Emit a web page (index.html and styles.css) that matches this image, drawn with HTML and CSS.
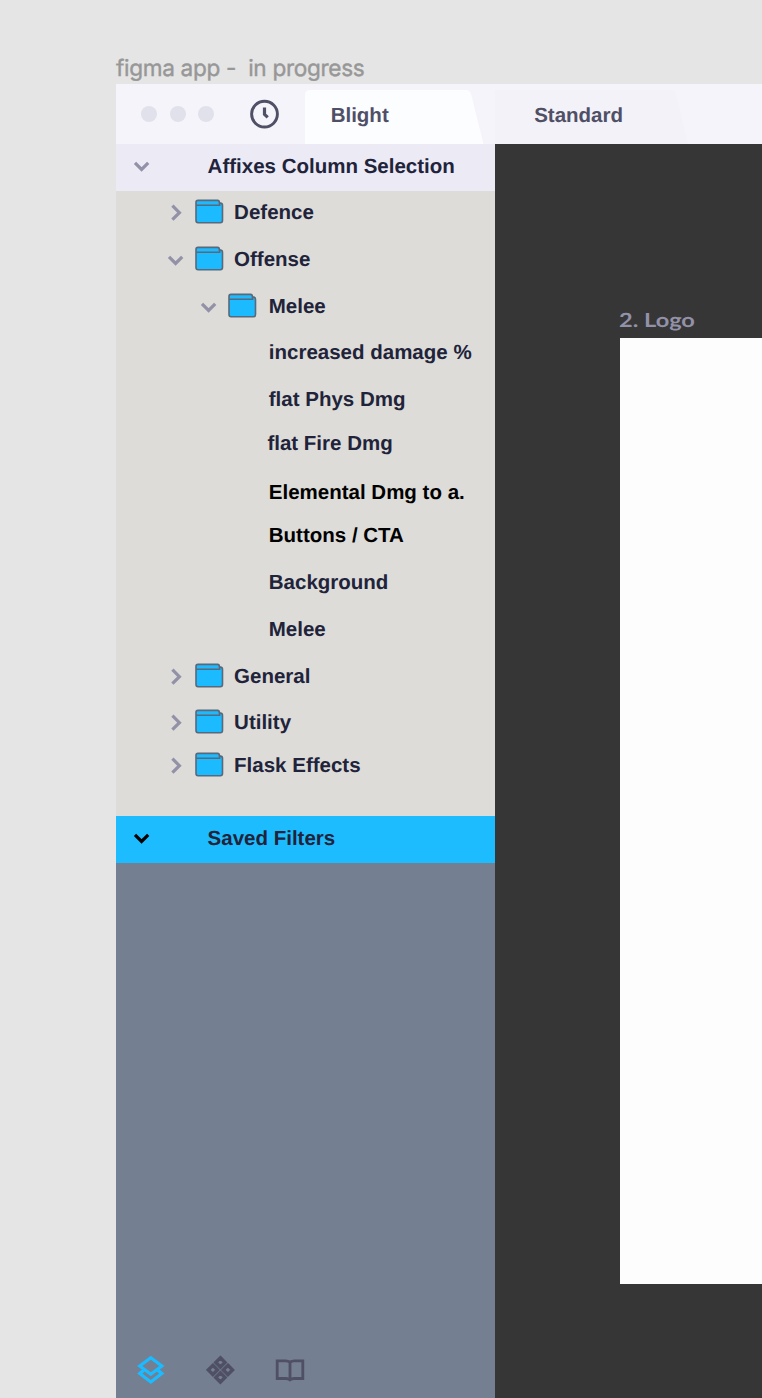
FILE: index.html
```html
<!DOCTYPE html>
<html lang="en">
<head>
<meta charset="utf-8">
<title>figma app - in progress</title>
<link rel="stylesheet" href="styles.css">
</head>
<body>
<svg class="defs" width="0" height="0">
  <symbol id="down" viewBox="0 0 18 12"><path d="M2 1.8 8.6 8.4 15.2 1.8" fill="none" stroke="currentColor" stroke-width="3.2"/></symbol>
  <symbol id="right" viewBox="0 0 12 18"><path d="M2.4 1.7 9.4 8.7 2.4 15.7" fill="none" stroke="currentColor" stroke-width="3.2"/></symbol>
  <symbol id="folder" viewBox="0 0 30 25"><g fill="#1cbafe" stroke="#57697a" stroke-width="1.6"><path d="M2 6.3V3.4Q2 1.4 4 1.4H23.6Q25.3 1.4 25.6 4.1H26.3Q28.5 4.1 28.5 6.3V21.6Q28.5 23.7 26.4 23.7H4.1Q2 23.7 2 21.6Z"/><path d="M2 6.2H25.6V3.7" fill="none"/></g></symbol>
</svg>
<h1 class="frame-title">figma app -&nbsp; in progress</h1>
<div class="app">
  <header class="topbar">
    <div class="dots"><i></i><i></i><i></i></div>
    <svg class="clock" width="30" height="30" viewBox="0 0 30 30" fill="none" stroke="#4f4f66" stroke-width="2.9"><circle cx="15.5" cy="15.1" r="12.9"/><path d="M15.5 8.5V15.3L18.7 18.4" stroke-width="3.2"/></svg>
    <div class="tab tab-active"><svg class="tab-shape" width="179" height="54" viewBox="0 0 179 54"><path d="M0 54V5Q0 0 5 0H161Q165 0 166 4L178.5 54Z" fill="#fcfdff"/></svg><span>Blight</span></div>
    <div class="tab tab-next"><svg class="tab-shape" width="193" height="54" viewBox="0 0 193 54"><path d="M0 54V0H177Q180 0 181 4L193 54Z" fill="#f3f2f9"/></svg><span>Standard</span></div>
  </header>
  <div class="body">
    <aside class="sidebar">
      <div class="section"><svg class="chev" width="18" height="12"><use href="#down"/></svg><span>Affixes Column Selection</span></div>
      <div class="tree">
        <div class="row level1"><svg class="chev-right" width="12" height="18"><use href="#right"/></svg><svg class="folder" width="30" height="25"><use href="#folder"/></svg><span>Defence</span></div>
        <div class="row level1"><svg class="chev" width="18" height="12"><use href="#down"/></svg><svg class="folder" width="30" height="25"><use href="#folder"/></svg><span>Offense</span></div>
        <div class="row level2 short"><svg class="chev" width="18" height="12"><use href="#down"/></svg><svg class="folder" width="30" height="25"><use href="#folder"/></svg><span>Melee</span></div>
        <div class="row leaf"><span>increased damage %</span></div>
        <div class="row leaf tight"><span>flat Phys Dmg</span></div>
        <div class="row leaf outdent"><span>flat Fire Dmg</span></div>
        <div class="row leaf tight strong"><span>Elemental Dmg to a.</span></div>
        <div class="row leaf short strong raised"><span>Buttons / CTA</span></div>
        <div class="row leaf"><span>Background</span></div>
        <div class="row leaf"><span>Melee</span></div>
        <div class="row level1 short"><svg class="chev-right" width="12" height="18"><use href="#right"/></svg><svg class="folder" width="30" height="25"><use href="#folder"/></svg><span>General</span></div>
        <div class="row level1 compact"><svg class="chev-right" width="12" height="18"><use href="#right"/></svg><svg class="folder" width="30" height="25"><use href="#folder"/></svg><span>Utility</span></div>
        <div class="row level1"><svg class="chev-right" width="12" height="18"><use href="#right"/></svg><svg class="folder" width="30" height="25"><use href="#folder"/></svg><span>Flask Effects</span></div>
      </div>
      <div class="section saved"><svg class="chev" width="18" height="12"><use href="#down"/></svg><span>Saved Filters</span></div>
      <nav class="tools">
        <svg width="30" height="30" viewBox="0 0 30 30" fill="none" stroke="#1cbafe" stroke-width="3.3"><path d="M14.8 2.7 25.8 11 14.8 19.3 3.8 11Z"/><path d="M7.6 15.4 3.8 18.5 14.8 27 25.8 18.5 22 15.4"/></svg>
        <svg width="30" height="30" viewBox="0 0 30 30" fill="none" stroke="#4f4f66" stroke-width="3.4"><path d="M14.4 2.8 19 7.4 14.4 12 9.8 7.4ZM6.9 10.3 11.5 14.9 6.9 19.5 2.3 14.9ZM21.9 10.3 26.5 14.9 21.9 19.5 17.3 14.9ZM14.4 17.8 19 22.4 14.4 27 9.8 22.4Z"/></svg>
        <svg width="30" height="30" viewBox="0 0 30 30" fill="none" stroke="#4f4f66" stroke-width="2.8"><path d="M15 7.2Q13 5.9 10.8 5.9H2.2V23.5H10.8Q13.5 23.5 15 24.8Q16.5 23.5 19.2 23.5H27.8V5.9H19.2Q17 5.9 15 7.2V26"/></svg>
      </nav>
    </aside>
    <main class="canvas">
      <h2 class="artboard-title">2. Logo</h2>
      <div class="artboard"></div>
    </main>
  </div>
</div>
</body>
</html>
```

FILE: styles.css
```css
* { box-sizing: border-box; }
body {
  margin: 0;
  width: 762px;
  height: 1398px;
  overflow: hidden;
  background: #e5e5e5;
  font: bold 20.5px/24px "Liberation Sans", Arial, sans-serif;
  text-rendering: geometricPrecision;
  color: #21233a;
  display: flex;
  flex-direction: column;
}
svg { display: block; flex: none; }
.defs { display: none; }
.frame-title {
  margin: 0;
  height: 84px;
  padding: 55px 0 0 116px;
  font: 400 22.6px/28px Inter, sans-serif;
  letter-spacing: -0.32px;
  color: #979797;
  -webkit-text-stroke: 0.4px #979797;
  white-space: nowrap;
}
.app { flex: 1; margin-left: 116px; display: flex; flex-direction: column; }
.topbar { height: 60px; flex: none; background: #f5f4fa; display: flex; align-items: flex-start; }
.dots { display: flex; gap: 12.4px; padding: 22px 0 0 25.4px; }
.dots i { width: 16px; height: 16px; border-radius: 50%; background: #e1e1eb; }
.clock { margin: 15px 0 0 35px; }
.tab { position: relative; height: 54px; margin-top: 6px; padding-top: 14px; color: #4f4f66; }
.tab span { position: relative; }
.tab-shape { position: absolute; left: 0; top: 0; }
.tab-active { width: 190px; margin-left: 25.6px; padding-left: 25.9px; }
.tab-next { width: 193px; padding-left: 39.4px; }
.body { flex: 1; display: flex; background: #363636; }
.sidebar { width: 379px; background: #747f91; display: flex; flex-direction: column; }
.section { height: 47px; flex: none; display: flex; background: #ebeaf5; padding-left: 17px; color: #21233a; }
.section span { margin: 11px 0 0 56.6px; }
.section .chev { margin-top: 17px; color: #9291a8; }
.saved { background: #1cbcff; }
.saved .chev { color: #000; }
.tree { height: 625px; background: #dddcd8; flex: none; }
.row { height: 47px; display: flex; white-space: nowrap; }
.row span { margin-top: 10px; }
.row .chev, .row .chev-right { color: #9291a8; }
.row .chev { margin: 17px 9px 0 0; }
.row .chev-right { margin: 13px 12px 0 3px; }
.folder { margin: 8px 10.1px 0 0; }
.level1 { padding-left: 51px; }
.level2 { padding-left: 84px; }
.level2 span { margin-left: 1.7px; }
.leaf { padding-left: 152.8px; }
.outdent { padding-left: 151.4px; height: 49px; }
.short { height: 46px; }
.tight { height: 44px; }
.compact { height: 43px; }
.strong { color: #000; }
.raised span { margin-top: 9px; }
.tools { margin-top: auto; display: flex; gap: 39.5px; padding: 0 0 13px 20px; }
.canvas { flex: 1; padding: 165px 0 0 124.5px; }
.artboard-title {
  margin: 0;
  width: 70px;
  height: 29px;
  font: 700 19.5px/24px Lato, sans-serif;
  color: #9291a8;
  white-space: nowrap;
  transform: translateX(-1px) scaleX(1.21);
  transform-origin: 0 0;
}
.artboard { height: 946px; background: #fdfdfd; }
```
